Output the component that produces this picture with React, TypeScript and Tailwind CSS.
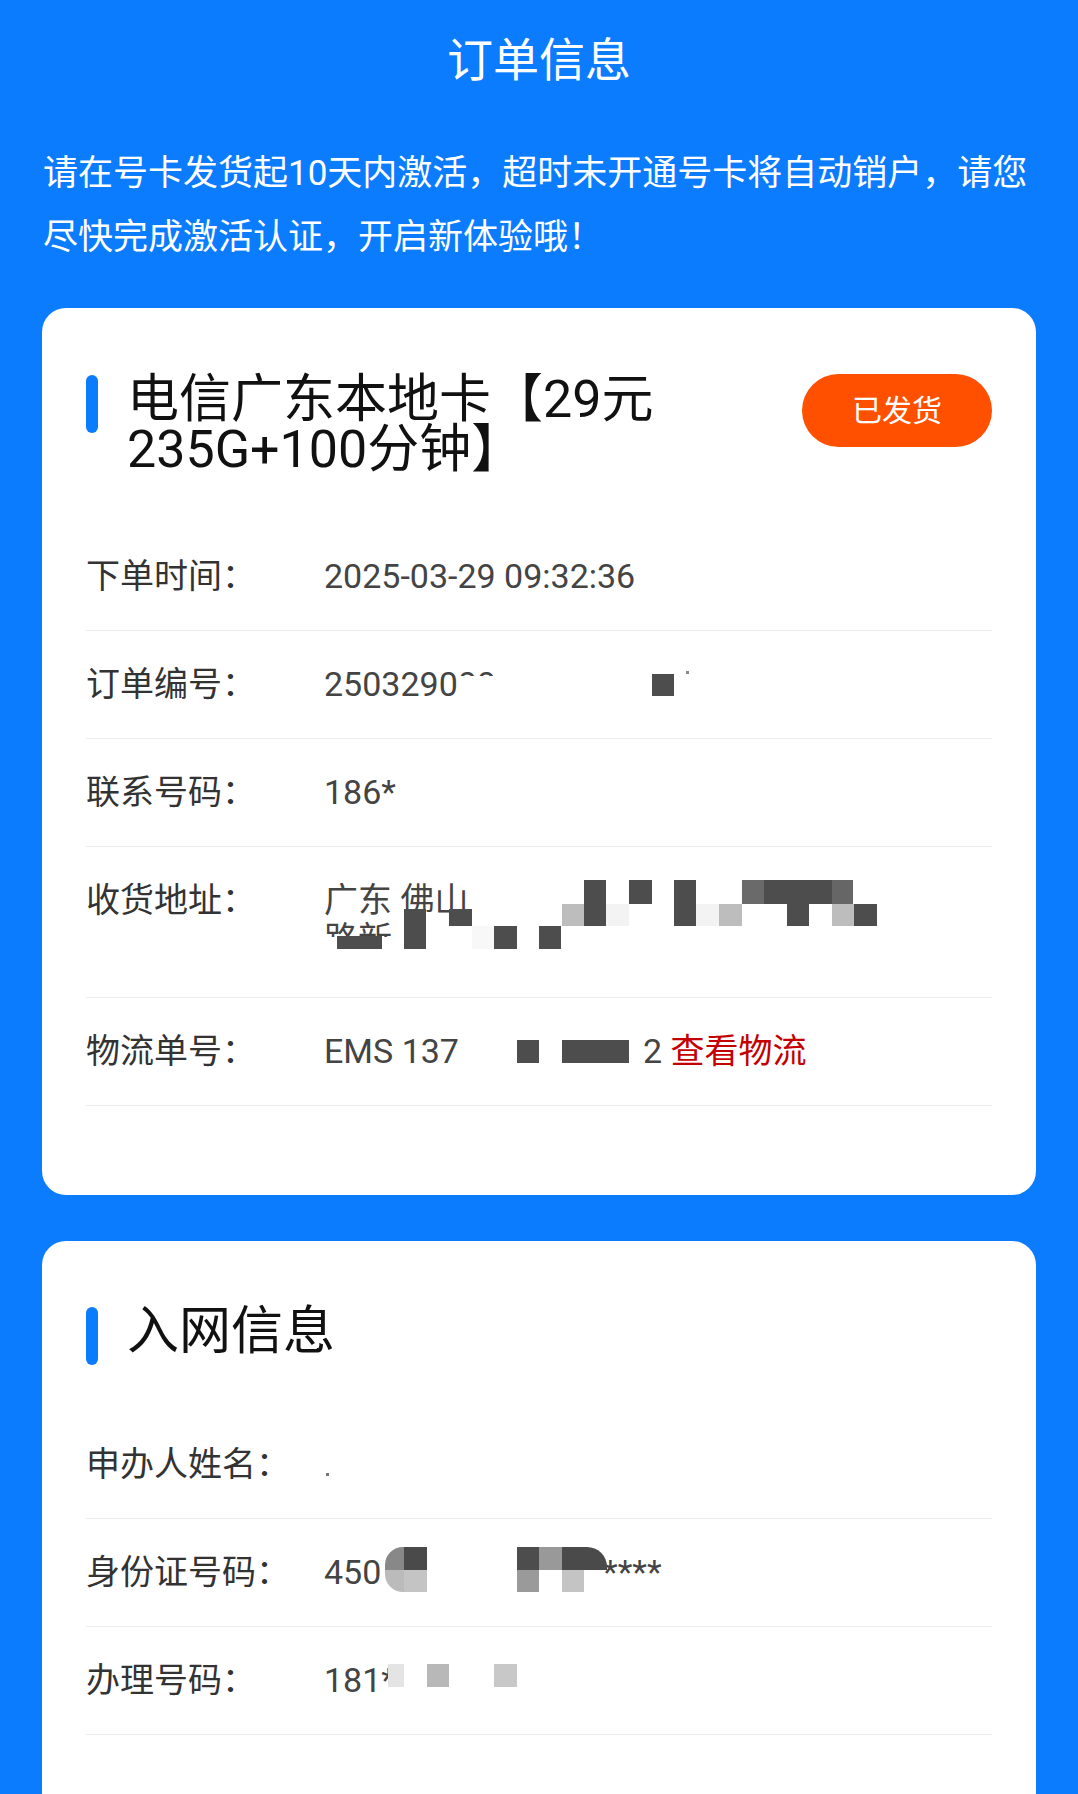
import type { ReactNode } from 'react';

type Cell = { x: number; y: number; w: number; h: number; c: string; r?: string };

// privacy mosaic laid over a value
function Mosaic({ cells }: { cells: Cell[] }) {
    return (
        <>
            {cells.map((m, i) => (
                <span
                    key={i}
                    className="absolute block"
                    style={{ left: m.x, top: m.y, width: m.w, height: m.h, background: m.c, borderRadius: m.r }}
                />
            ))}
        </>
    );
}

function Row({ label, children, cells = [], tall = false }: { label: string; children?: ReactNode; cells?: Cell[]; tall?: boolean }) {
    return (
        <div className={`flex items-start pt-[34px] ${tall ? 'pb-[38px]' : 'pb-[34px]'} border-b border-[#ececec]`}>
            <div className="w-[238px] shrink-0 text-[34px] leading-[39px] text-[#333]">{label}</div>
            <div className="relative flex-1 text-[34px] leading-[39px] text-[#444]">
                {children}
                <Mosaic cells={cells} />
            </div>
        </div>
    );
}

function CardHeader({ children, badge }: { children: ReactNode; badge?: string }) {
    return (
        <div className="flex items-start justify-between">
            <div className="flex items-start">
                <span className="block w-[12px] h-[58px] rounded-full bg-[#0b7cfe] shrink-0" />
                <h2 className="ml-[29px] text-[52px] leading-[50px] text-[#111] font-normal">{children}</h2>
            </div>
            {badge && (
                <span className="flex items-center justify-center w-[190px] h-[73px] -mt-[1px] rounded-full bg-[#ff5000] text-white text-[30px]">
                    {badge}
                </span>
            )}
        </div>
    );
}

const D = '#4d4d4d';

const orderCells: Cell[] = [
    { x: 328, y: 9, w: 22, h: 22, c: D },
    { x: 362, y: 6, w: 3, h: 3, c: '#888' },
];

const addrCells: Cell[] = [
    // top row
    { x: 260, y: -1, w: 22, h: 24, c: D },
    { x: 305, y: -1, w: 23, h: 24, c: D },
    { x: 350, y: -1, w: 22, h: 24, c: D },
    { x: 418, y: -1, w: 22, h: 24, c: '#6a6a6a' },
    { x: 440, y: -1, w: 68, h: 24, c: D },
    { x: 508, y: -1, w: 21, h: 24, c: '#666' },
    // middle row
    { x: 238, y: 23, w: 22, h: 22, c: '#bdbdbd' },
    { x: 260, y: 23, w: 22, h: 22, c: D },
    { x: 282, y: 23, w: 23, h: 22, c: '#f3f3f3' },
    { x: 350, y: 23, w: 22, h: 22, c: D },
    { x: 372, y: 23, w: 23, h: 22, c: '#f3f3f3' },
    { x: 395, y: 23, w: 23, h: 22, c: '#bdbdbd' },
    { x: 463, y: 23, w: 22, h: 22, c: D },
    { x: 508, y: 23, w: 22, h: 22, c: '#bdbdbd' },
    { x: 530, y: 23, w: 23, h: 22, c: D },
    // lower left
    { x: 80, y: 28, w: 22, h: 40, c: D },
    { x: 125, y: 28, w: 23, h: 17, c: D },
    { x: 148, y: 45, w: 22, h: 23, c: '#f8f8f8' },
    { x: 170, y: 45, w: 23, h: 23, c: D },
    { x: 215, y: 45, w: 22, h: 23, c: D },
    { x: 13, y: 55, w: 45, h: 13, c: D },
];

const shipCells: Cell[] = [
    { x: 193, y: 8, w: 22, h: 23, c: D },
    { x: 238, y: 8, w: 67, h: 23, c: D },
];

const idCells: Cell[] = [
    { x: 61, y: -6, w: 19, h: 23, c: '#888', r: '18px 0 0 0' },
    { x: 80, y: -6, w: 23, h: 23, c: '#4a4a4a' },
    { x: 61, y: 17, w: 19, h: 22, c: '#bbb', r: '0 0 0 18px' },
    { x: 80, y: 17, w: 23, h: 22, c: '#c4c4c4' },
    { x: 193, y: -6, w: 22, h: 23, c: D },
    { x: 215, y: -6, w: 23, h: 23, c: '#999' },
    { x: 238, y: -6, w: 45, h: 23, c: '#4a4a4a', r: '0 20px 0 0' },
    { x: 193, y: 17, w: 22, h: 22, c: '#9a9a9a' },
    { x: 238, y: 17, w: 22, h: 22, c: '#c4c4c4' },
];

const phoneCells: Cell[] = [
    { x: 64, y: 3, w: 16, h: 23, c: '#e4e4e4' },
    { x: 103, y: 3, w: 22, h: 23, c: '#b8b8b8' },
    { x: 170, y: 3, w: 23, h: 23, c: '#c8c8c8' },
];

export default function App() {
    return (
        <main className="min-h-screen bg-[#0b7cfe] font-['Roboto','Noto_Sans_CJK_SC',sans-serif]">
            <header className="h-[120px] flex items-center justify-center">
                <h1 className="text-[46px] leading-none text-white font-normal">订单信息</h1>
            </header>

            <p className="mt-[22px] px-[43px] text-[35px] leading-[64px] text-white">
                请在号卡发货起10天内激活，超时未开通号卡将自动销户，请您
                <br />
                尽快完成激活认证，开启新体验哦！
            </p>

            {/* Order card */}
            <section className="mx-[42px] mt-[38px] rounded-[24px] bg-white px-[44px] pt-[67px] pb-[89px]">
                <CardHeader badge="已发货">
                    电信广东本地卡【29元
                    <br />
                    235G+100分钟】
                </CardHeader>

                <div className="mt-[48px]">
                    <Row label="下单时间：">2025-03-29 09:32:36</Row>
                    <Row label="订单编号：" cells={orderCells}>
                        250329
                        <span className="[clip-path:inset(0_0_18%_0)]">0</span>
                        <span className="[clip-path:inset(0_0_70%_0)]">00</span>
                    </Row>
                    <Row label="联系号码：">186*</Row>
                    <Row label="收货地址：" cells={addrCells} tall>
                        广东 佛山
                        <br />
                        <span className="[clip-path:inset(0_0_55%_0)]">路新</span>
                    </Row>
                    <Row label="物流单号：" cells={shipCells}>
                        <span className="inline-block w-[319px]">EMS 137</span>2{' '}
                        <span className="text-[#c40000]">查看物流</span>
                    </Row>
                </div>
            </section>

            {/* Network card */}
            <section className="mx-[42px] mt-[46px] rounded-t-[24px] bg-white px-[44px] pt-[66px] pb-[120px]">
                <CardHeader>入网信息</CardHeader>

                <div className="mt-[46px]">
                    <Row label="申办人姓名：" cells={[{ x: 2, y: 28, w: 3, h: 3, c: '#777' }]}>
                        {' '}
                    </Row>
                    <Row label="身份证号码：" cells={idCells}>
                        <span className="inline-block w-[279px]">450</span>****
                    </Row>
                    <Row label="办理号码：" cells={phoneCells}>181*</Row>
                </div>
            </section>
        </main>
    );
}
